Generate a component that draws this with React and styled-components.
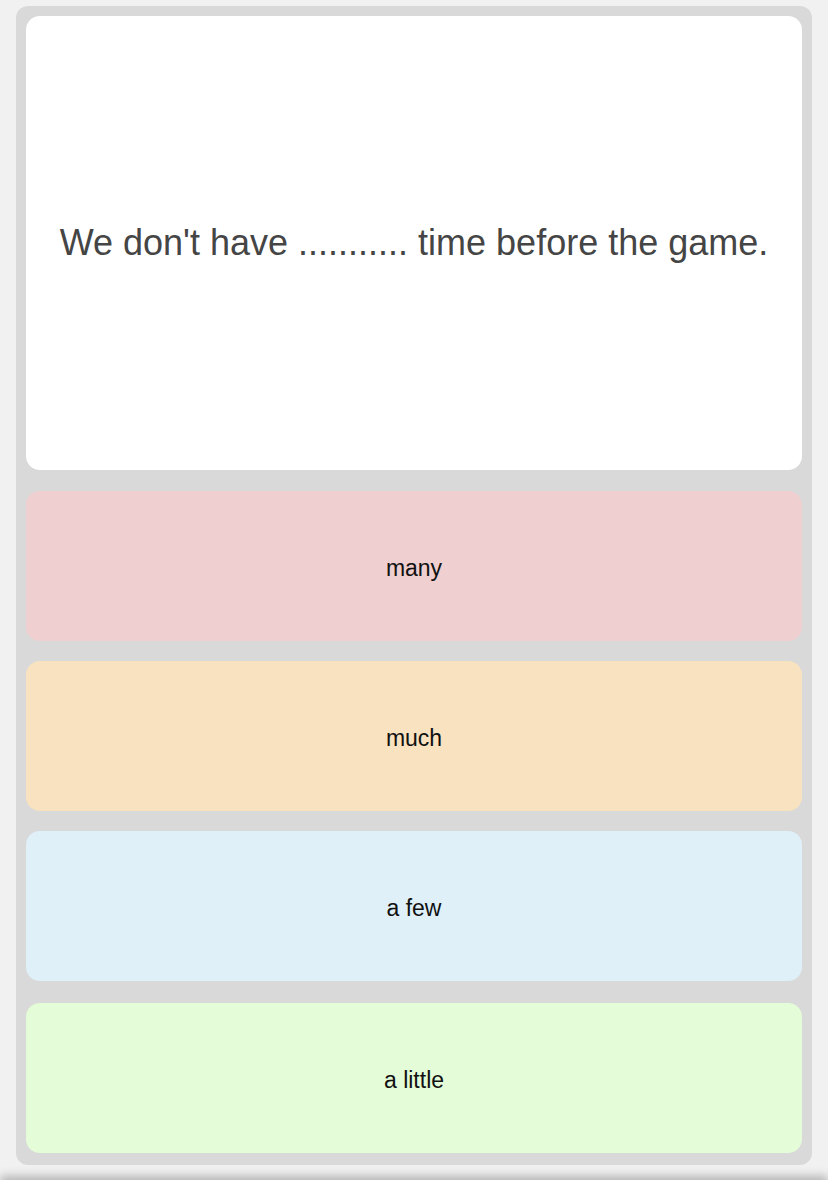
import React from 'react';
import styled, { createGlobalStyle } from 'styled-components';

const GlobalStyle = createGlobalStyle`
  html, body {
    margin: 0;
    padding: 0;
    background: #f1f1f1;
    font-family: 'Liberation Sans', Arial, sans-serif;
  }
`;

const Page = styled.div`
  width: 828px;
  height: 1180px;
  padding: 6px 16px 0;
  box-sizing: border-box;
  position: relative;
  overflow: hidden;

  &:after {
    content: '';
    position: absolute;
    left: 0;
    right: 0;
    bottom: -14px;
    height: 14px;
    box-shadow: 0 -4px 10px rgba(0, 0, 0, 0.25);
  }
`;

const Board = styled.div`
  background: #d9d9d9;
  border-radius: 12px;
  padding: 10px 10px 12px;
  display: flex;
  flex-direction: column;
  gap: 20px;
`;

const Question = styled.div`
  height: 454px;
  background: #ffffff;
  border-radius: 14px;
  display: flex;
  align-items: center;
  justify-content: center;
  color: #454545;
  font-size: 36px;
  margin-bottom: 1px;
`;

const Option = styled.div`
  height: 150px;
  box-sizing: border-box;
  padding-top: 4px;
  background: ${(p) => p.$bg};
  border-radius: 14px;
  display: flex;
  align-items: center;
  justify-content: center;
  color: #111;
  font-size: 23px;
  margin-top: ${(p) => (p.$last ? '2px' : '0')};
`;

const options = [
  { label: 'many', bg: '#efcfcf' },
  { label: 'much', bg: '#f8e2c0' },
  { label: 'a few', bg: '#dff0f9' },
  { label: 'a little', bg: '#e4fcd8' },
];

const App = () => (
  <>
    <GlobalStyle />
    <Page>
      <Board>
        <Question>We don't have ........... time before the game.</Question>
        {options.map((o, i) => (
          <Option key={o.label} $bg={o.bg} $last={i === options.length - 1}>
            {o.label}
          </Option>
        ))}
      </Board>
    </Page>
  </>
);

export default App;
